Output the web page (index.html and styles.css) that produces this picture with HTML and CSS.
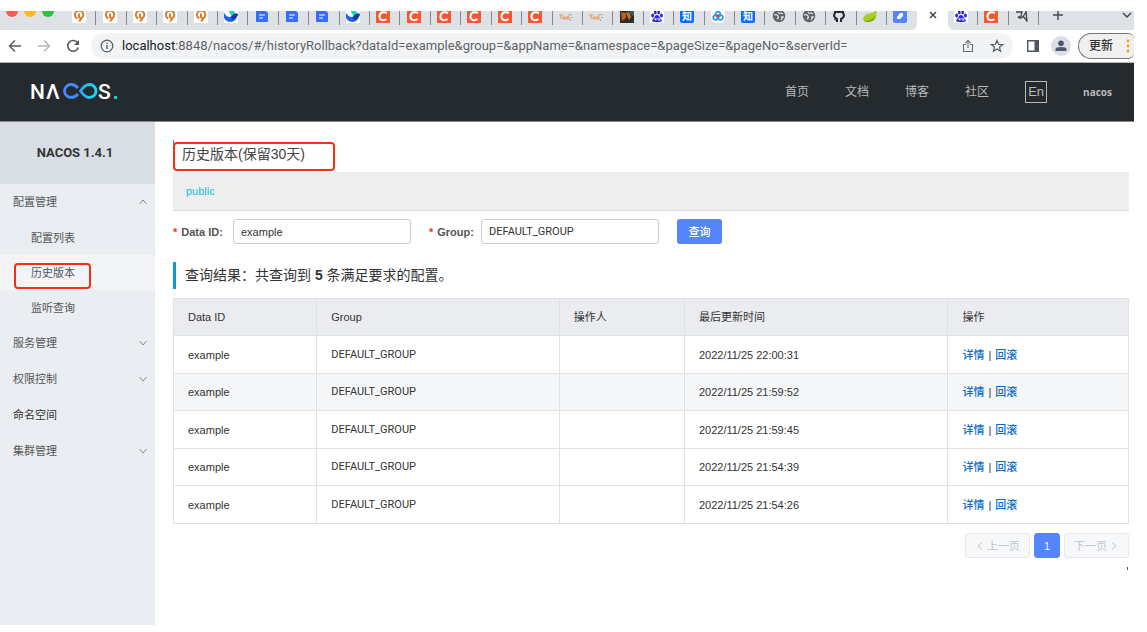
FILE: index.html
```html
<!DOCTYPE html>
<html lang="zh-CN">
<head>
<meta charset="utf-8">
<title>Nacos</title>
<link rel="stylesheet" href="styles.css">
</head>
<body>
<svg class="defs" aria-hidden="true">
  <symbol id="q" viewBox="0 0 14 14"><rect width="14" height="14" fill="#fff"/><path d="M5.200 9.500A4.200 4.200 0 1 1 9.500 9.200M7 4.500V8.500M7 8L9 10L7 12.500" fill="none" stroke="#e07a2c" stroke-width="2"/></symbol>
  <symbol id="bird" viewBox="0 0 14 14"><rect width="14" height="14" fill="#fff"/><path d="M4 1h5l3 4-4 3z" fill="#20d3b2"/><path d="M0 4c3 4 5 5 8 3 1-2 3-3 6-2-1 5-4 8-7 8S2 12 0 9z" fill="#2563e8"/><path d="M7 8c2-3 4-4 7-3-1 3-3 5-6 6z" fill="#153a9c"/></symbol>
  <symbol id="doc" viewBox="0 0 14 14"><path d="M1 2q0-1 1-1h8l3 3v8q0 1-1 1H2q-1 0-1-1z" fill="#356dff"/><path d="M4 6h6M4 9h4" stroke="#fff" stroke-width="1"/></symbol>
  <symbol id="c" viewBox="0 0 14 14"><rect width="14" height="14" fill="#fc5531"/><path d="M11 4.300C9 2.500 4 2.500 3.500 7S8 12 10.500 10" fill="none" stroke="#fff" stroke-width="2"/></symbol>
  <symbol id="tool" viewBox="0 0 14 14"><path d="M0 6h4M2 6v4M4 8h2v2H4zM7 8h2v2H7zM10 5v6" fill="none" stroke="#ee9650"/><path d="M12 5v1M13 8v1M11 11h1" stroke="#6572bd"/></symbol>
  <symbol id="photo" viewBox="0 0 14 14"><rect width="14" height="14" fill="#35291f"/><path d="M1 3l5 1v5l-4 3z" fill="#b85f22"/><path d="M6 4l3-1 2 5-2 3z" fill="#d17424"/><path d="M9 1h5v6l-3-1z" fill="#355e68"/><path d="M9 12l5-3v5H9z" fill="#193839"/></symbol>
  <symbol id="paw" viewBox="0 0 14 14"><rect width="14" height="14" rx="1" fill="#fff"/><g fill="#302bd6"><ellipse cx="2.700" cy="6.500" rx="1.500" ry="1.900"/><ellipse cx="5.300" cy="3.500" rx="1.400" ry="1.900"/><ellipse cx="8.700" cy="3.500" rx="1.400" ry="1.900"/><ellipse cx="11.400" cy="6.500" rx="1.500" ry="1.900"/><path d="M7 6c2 0 2 2 4 4s0 3-2 3H5c-2 0-4-1-2-3s2-4 4-4z"/></g><path d="M5 9v2h1V9M8 9v2h2V9" stroke="#fff" stroke-width=".8" fill="none"/></symbol>
  <symbol id="zhi" viewBox="0 0 14 14"><rect width="14" height="14" rx="2" fill="#0b6cff"/><text x="7" y="11" text-anchor="middle" class="zhi-text">知</text></symbol>
  <symbol id="cloud" viewBox="0 0 14 14"><rect width="14" height="14" rx="5" fill="#fff"/><g fill="none" stroke-width="1.700"><circle cx="7" cy="5" r="2.300" stroke="#1898ee"/><circle cx="4.500" cy="8.500" r="2.300" stroke="#1898ee"/><circle cx="9.500" cy="8.500" r="2.300" stroke="#16a6e8"/><path d="M5 8l2-2 2 2" stroke="#ee4059"/></g></symbol>
  <symbol id="globe" viewBox="0 0 14 14"><circle cx="7" cy="7" r="6.200" fill="#5f6368"/><path d="M2 6q3-1 4 1t-1 3M6 3q1 2 3 1l2 1M9 8l2 0-2 3" stroke="#e3e6e9" stroke-width="1.300" fill="none"/></symbol>
  <symbol id="cat" viewBox="0 0 14 14"><path d="M5 13v-3c-2-1-3-2-3-4l1-2V2l2 1h4l2-1v2l1 2c0 2-1 3-3 4v3" fill="none" stroke="#25292e" stroke-width="2"/><path d="M2 10l3 2" stroke="#25292e"/></symbol>
  <symbol id="leaf" viewBox="0 0 14 14"><path d="M13 1c2 8-1 12-9 12-6 0-4-7 0-8 4-1 7-1 9-4z" fill="#a9cd20"/><path d="M1 12c6 0 10-2 11-6 0 5-3 7-8 7z" fill="#6da31c"/></symbol>
  <symbol id="tag" viewBox="0 0 14 14"><rect width="14" height="14" rx="2" fill="#5484ff"/><path d="M4 8l3-4h3v3l-3 3H4z" fill="#fff"/></symbol>
  <symbol id="brush" viewBox="0 0 14 14"><path d="M1 3h6l-1 4-3 1M3 8c3 3 6-1 8-5M8 7l4 5M11 1l1 12" fill="none" stroke="#44474a" stroke-width="1.300"/></symbol>
  <symbol id="down" viewBox="0 0 10 10"><path d="M1.500 3L5 7l3.500-4" fill="none" stroke="currentColor"/></symbol>
</svg>

<div class="browser">
  <div class="tabstrip">
    <div class="lights"><i class="light red"></i><i class="light amber"></i><i class="light green"></i></div>
    <div class="tabs before">
      <span class="tab"><svg><use href="#q"/></svg></span><span class="tab"><svg><use href="#q"/></svg></span><span class="tab"><svg><use href="#q"/></svg></span><span class="tab"><svg><use href="#q"/></svg></span><span class="tab"><svg><use href="#q"/></svg></span>
      <span class="tab"><svg><use href="#bird"/></svg></span><span class="tab"><svg><use href="#doc"/></svg></span><span class="tab"><svg><use href="#doc"/></svg></span><span class="tab"><svg><use href="#doc"/></svg></span><span class="tab"><svg><use href="#bird"/></svg></span>
      <span class="tab"><svg><use href="#c"/></svg></span><span class="tab"><svg><use href="#c"/></svg></span><span class="tab"><svg><use href="#c"/></svg></span><span class="tab"><svg><use href="#c"/></svg></span><span class="tab"><svg><use href="#c"/></svg></span><span class="tab"><svg><use href="#c"/></svg></span>
      <span class="tab"><svg><use href="#tool"/></svg></span><span class="tab"><svg><use href="#tool"/></svg></span><span class="tab"><svg><use href="#photo"/></svg></span><span class="tab"><svg><use href="#paw"/></svg></span><span class="tab"><svg><use href="#zhi"/></svg></span><span class="tab"><svg><use href="#cloud"/></svg></span><span class="tab"><svg><use href="#zhi"/></svg></span>
      <span class="tab"><svg><use href="#globe"/></svg></span><span class="tab"><svg><use href="#globe"/></svg></span><span class="tab"><svg><use href="#cat"/></svg></span><span class="tab"><svg><use href="#leaf"/></svg></span><span class="tab"><svg><use href="#tag"/></svg></span>
    </div>
    <button class="tab-active" aria-label="关闭标签页"><svg viewBox="0 0 10 10"><path d="M2 2l6 6M8 2l-6 6" stroke="#45484c" stroke-width="1.500"/></svg></button>
    <div class="tabs after">
      <span class="tab"><svg><use href="#paw"/></svg></span><span class="tab"><svg><use href="#c"/></svg></span><span class="tab"><svg><use href="#brush"/></svg></span>
    </div>
    <div class="tab-tools">
      <button class="plain" aria-label="新标签页"><svg viewBox="0 0 12 12"><path d="M6 1v10M1 6h10" stroke="#45484c" stroke-width="1.500"/></svg></button>
      <button class="plain" aria-label="搜索标签页"><svg viewBox="0 0 12 12"><path d="M2 4l4 4 4-4" fill="none" stroke="#45484c" stroke-width="1.500"/></svg></button>
    </div>
  </div>

  <div class="toolbar">
    <div class="history">
      <button class="plain" aria-label="后退"><svg viewBox="0 0 14 14"><path d="M13 7H1.500M7 1.500L1.500 7 7 12.500" fill="none" stroke="#56595d" stroke-width="1.500"/></svg></button>
      <button class="plain" aria-label="前进"><svg viewBox="0 0 14 14"><path d="M1 7h11.500M7 1.500L12.500 7 7 12.500" fill="none" stroke="#b5b7ba" stroke-width="1.500"/></svg></button>
      <button class="plain" aria-label="刷新"><svg viewBox="0 0 14 14"><path d="M12 4.500A5.400 5.400 0 1 0 12.300 8.500" fill="none" stroke="#56595d" stroke-width="1.600"/><path d="M13 1v5H8z" fill="#56595d"/></svg></button>
    </div>
    <div class="address">
      <svg class="info" viewBox="0 0 14 14"><circle cx="7" cy="7" r="5.800" fill="none" stroke="#56595d" stroke-width="1.200"/><path d="M7 6v4M7 3.700v1.300" stroke="#56595d" stroke-width="1.400"/></svg>
      <span class="url"><b>localhost</b>:8848/nacos/#/historyRollback?dataId=example&amp;group=&amp;appName=&amp;namespace=&amp;pageSize=&amp;pageNo=&amp;serverId=</span>
      <button class="plain" aria-label="分享"><svg viewBox="0 0 14 14"><path d="M5 5.500H2.500v7h9v-7H9M7 9V1.500M4.500 4L7 1.500 9.500 4" fill="none" stroke="#6a6d71" stroke-width="1.100"/></svg></button>
      <button class="plain" aria-label="收藏"><svg viewBox="0 0 14 14"><path d="M7 1.500l1.600 3.800 4.100.3-3.200 2.600 1 4L7 10l-3.500 2.200 1-4L1.300 5.600l4.100-.3z" fill="none" stroke="#56595d" stroke-width="1.200"/></svg></button>
    </div>
    <button class="plain panel" aria-label="侧边栏"><svg viewBox="0 0 14 14"><path d="M1.700 1.700h10.600v10.600H1.700z" fill="none" stroke="#4f5563" stroke-width="1.400"/><path d="M8.500 2H12v10H8.500z" fill="#4f5563"/></svg></button>
    <button class="plain avatar" aria-label="用户"><svg viewBox="0 0 20 20"><circle cx="10" cy="10" r="10" fill="#dcdfe5"/><circle cx="10" cy="7.200" r="2.800" fill="#4c5870"/><path d="M4.500 15v-2q0-2 5.500-2t5.500 2v2z" fill="#4c5870"/></svg></button>
    <button class="update">更新<svg viewBox="0 0 4 14"><g fill="#f39b16"><circle cx="2" cy="2" r="1.400"/><circle cx="2" cy="7" r="1.400"/><circle cx="2" cy="12" r="1.400"/></g></svg></button>
  </div>

  <header class="site-header">
    <a class="logo" href="#" aria-label="NACOS">
      <svg viewBox="0 0 90 22">
        <defs><linearGradient id="loop" x1="0" x2="1"><stop offset="0" stop-color="#2aa8f2"/><stop offset="1" stop-color="#18dced"/></linearGradient></defs>
        <text class="logo-text" x="0" y="18">N</text><text class="logo-text" x="16" y="18">Λ</text><text class="logo-text" x="68" y="18">S</text>
        <path d="M48 7Q45 3.500 41 3.500A6.500 6.500 0 0 0 41 16.500Q45 16.500 48 13" fill="none" stroke="#438aff" stroke-width="2.800"/>
        <path d="M50.500 10Q55 3.500 59.500 3.500A6.500 6.500 0 0 1 59.500 16.500Q55 16.500 50.500 10z" fill="none" stroke="url(#loop)" stroke-width="2.800" stroke-linejoin="round"/>
        <path d="M84 15h3v3h-3z" fill="#17c9dc"/>
      </svg>
    </a>
    <nav class="site-nav"><a href="#">首页</a><a href="#">文档</a><a href="#">博客</a><a href="#">社区</a><button class="lang">En</button><a class="user" href="#">nacos</a></nav>
  </header>

  <div class="workspace">
    <aside class="sidebar">
      <h2 class="version">NACOS 1.4.1</h2>
      <nav class="menu">
        <a class="item" href="#">配置管理<svg class="up"><use href="#down"/></svg></a>
        <a class="sub" href="#">配置列表</a>
        <a class="sub selected" href="#">历史版本</a>
        <a class="sub" href="#">监听查询</a>
        <a class="item" href="#">服务管理<svg><use href="#down"/></svg></a>
        <a class="item" href="#">权限控制<svg><use href="#down"/></svg></a>
        <a class="item strong" href="#">命名空间</a>
        <a class="item" href="#">集群管理<svg><use href="#down"/></svg></a>
      </nav>
    </aside>

    <main class="content">
      <h1 class="title">历史版本(保留30天)</h1>
      <div class="namespace"><a href="#">public</a></div>
      <form class="query">
        <label for="data-id"><i>*</i>Data ID:</label>
        <input id="data-id" type="text" value="example">
        <label class="group-label" for="group"><i>*</i>Group:</label>
        <input id="group" class="group-name" type="text" value="DEFAULT_GROUP">
        <button type="button" class="search">查询</button>
      </form>
      <p class="result">查询结果：共查询到 <b>5</b> 条满足要求的配置。</p>
      <table class="versions">
        <colgroup><col class="col-id"><col class="col-group"><col class="col-operator"><col class="col-time"><col></colgroup>
        <thead><tr><th>Data ID</th><th>Group</th><th>操作人</th><th>最后更新时间</th><th>操作</th></tr></thead>
        <tbody>
          <tr><td>example</td><td class="group-name">DEFAULT_GROUP</td><td></td><td>2022/11/25 22:00:31</td><td><a href="#">详情</a><span class="bar">|</span><a href="#">回滚</a></td></tr>
          <tr class="hover"><td>example</td><td class="group-name">DEFAULT_GROUP</td><td></td><td>2022/11/25 21:59:52</td><td><a href="#">详情</a><span class="bar">|</span><a href="#">回滚</a></td></tr>
          <tr><td>example</td><td class="group-name">DEFAULT_GROUP</td><td></td><td>2022/11/25 21:59:45</td><td><a href="#">详情</a><span class="bar">|</span><a href="#">回滚</a></td></tr>
          <tr><td>example</td><td class="group-name">DEFAULT_GROUP</td><td></td><td>2022/11/25 21:54:39</td><td><a href="#">详情</a><span class="bar">|</span><a href="#">回滚</a></td></tr>
          <tr><td>example</td><td class="group-name">DEFAULT_GROUP</td><td></td><td>2022/11/25 21:54:26</td><td><a href="#">详情</a><span class="bar">|</span><a href="#">回滚</a></td></tr>
        </tbody>
      </table>
      <div class="pager">
        <button class="page" disabled><svg class="prev"><use href="#down"/></svg>上一页</button>
        <button class="page current">1</button>
        <button class="page" disabled>下一页<svg class="next"><use href="#down"/></svg></button>
      </div>
      <i class="mark"></i>
    </main>
  </div>
</div>
</body>
</html>
```
FILE: styles.css
```css
*, ::after { box-sizing: border-box; }
body {
  margin: 0;
  min-height: 100vh;
  padding: 11px 13px 7px 0;
  display: flex;
  background: #fff;
  color: #333;
  font: 11px/16px "Liberation Sans", "Noto Sans CJK SC", sans-serif;
}
a { color: inherit; text-decoration: none; }
button, input { font: inherit; color: inherit; margin: 0; }
svg { display: block; flex: none; }
.defs { position: absolute; width: 0; height: 0; }
.plain { border: 0; padding: 0; background: none; }
.browser { flex: 1; min-width: 0; display: flex; flex-direction: column; overflow: hidden; }

.tabstrip { display: flex; height: 19px; overflow: hidden; background: #fff; }
.lights { width: 66px; padding: 0 0 13px 6px; display: flex; gap: 6px; align-items: flex-end; background: #dee1e6; }
.light { width: 12px; height: 12px; border-radius: 50%; }
.red { background: #fc5b57; }
.amber { background: #fdb924; }
.green { background: #28c63f; }
.tabs { display: flex; background: #dee1e6; min-width: 0; }
.before { flex: 28; border-bottom-right-radius: 6px; }
.after { flex: 3; border-bottom-left-radius: 6px; }
.tab { flex: 1; height: 14px; display: flex; justify-content: center; align-items: flex-end; padding: 0 3px 2px 0; border-right: 1px solid #85888c; }
.before .tab:last-child { border-right-color: transparent; }
.tab svg { width: 14px; height: 14px; }
.zhi-text { fill: #fff; font: bold 10px "Noto Sans CJK SC", sans-serif; }
.tab-active { flex: 1; border: 0; padding: 0 0 10px; display: flex; align-items: flex-end; justify-content: center; background: #fff; }
.tab-active svg { width: 10px; height: 10px; }
.tab-tools { width: 95px; padding: 0 1px 9px 13px; display: flex; justify-content: space-between; align-items: flex-end; background: #dee1e6; }
.tab-tools svg { width: 12px; height: 12px; }

.toolbar { height: 33px; display: flex; align-items: center; border-bottom: 1px solid #b5b8bb; background: #fff; overflow: hidden; }
.history { width: 91px; padding-left: 8px; display: flex; gap: 15px; }
.history svg { width: 14px; height: 14px; }
.address { flex: 1; min-width: 0; height: 26px; padding: 0 9px; display: flex; align-items: center; border-radius: 13px; background: #f1f3f4; }
.info { width: 14px; height: 14px; margin-right: 8px; }
.url { flex: 1; min-width: 0; overflow: hidden; white-space: nowrap; font-family: Roboto, sans-serif; font-size: 13px; color: #5f6368; }
.url b { font-weight: 400; color: #202124; }
.address button { margin-left: 15px; }
.address svg { width: 14px; height: 14px; }
.panel { margin-left: 13px; }
.panel svg { width: 14px; height: 14px; }
.avatar { margin-left: 11px; }
.avatar svg { width: 20px; height: 20px; }
.update { width: 56px; height: 26px; margin-left: 7px; padding: 0 4px 0 10px; display: flex; align-items: center; justify-content: space-between; border: 1px solid #777; border-right: 0; border-radius: 13px 6px 6px 13px; background: #f0f0f0; font-size: 12px; font-weight: 500; white-space: nowrap; }
.update svg { width: 4px; height: 14px; }

.site-header { height: 59px; padding: 0 22px 0 30px; display: flex; align-items: center; justify-content: space-between; border-bottom: 1px solid #85898c; background: #252a2f; }
.logo svg { width: 90px; height: 22px; }
.logo-text { fill: #fff; font: 500 21px Roboto, sans-serif; }
.site-nav { display: flex; align-items: center; gap: 36px; color: #b8babb; font-size: 12px; }
.lang { width: 22px; height: 22px; padding: 0; border: 1px solid #b8babb; background: none; font-size: 13px; line-height: 20px; }
.user { font: bold 10px/16px "Open Sans", sans-serif; }

.workspace { flex: 1; display: flex; }
.sidebar { width: 155px; flex: none; background: #eaedf1; color: #555; }
.version { height: 62px; margin: 0; padding-right: 5px; display: flex; align-items: center; justify-content: center; background: #d9dee4; color: #333; font: bold 13px/16px Roboto, sans-serif; }
.menu { display: flex; flex-direction: column; }
.item { height: 36px; padding: 0 7px 0 13px; display: flex; align-items: center; justify-content: space-between; }
.item svg { width: 10px; height: 10px; color: #888; }
.item .up { transform: rotate(180deg); }
.strong { color: #333; }
.sub { height: 35px; padding-left: 31px; display: flex; align-items: center; }
.selected { position: relative; background: #f2f4f7; }
.selected::after, .title::after { content: ""; position: absolute; border: 2px solid #f5310f; border-radius: 4px; }
.selected::after { left: 14px; top: 8px; width: 77px; height: 26px; }

.content { flex: 1; min-width: 0; padding: 18px 5px 0 18px; display: flex; flex-direction: column; }
.title { position: relative; height: 28px; margin: 0 0 4px; padding-left: 8px; border-left: 1px solid #209bd0; font-size: 14px; font-weight: 400; line-height: 28px; color: #444; }
.title::after { left: -1px; top: 2px; width: 162px; height: 29px; }
.namespace { height: 39px; padding: 0 13px; display: flex; align-items: center; border-bottom: 1px solid #dcdcdc; background: #eee; color: #12bfdc; }
.query { padding: 8px 0; display: flex; align-items: center; }
.query label { width: 60px; color: #555; font-weight: bold; white-space: nowrap; }
.query label i { margin-right: 4px; color: #ff3000; font-style: normal; }
.query .group-label { width: 52px; margin-left: 18px; }
.query input { width: 178px; height: 25px; padding: 0 7px; border: 1px solid #c9ccd4; border-radius: 3px; background: #fff; }
.query .search { width: 45px; height: 25px; margin-left: 18px; padding: 0; border: 0; border-radius: 3px; background: #5584ff; color: #fff; font-weight: 500; }
.group-name { font-family: Roboto, sans-serif; }
.result { height: 27px; margin: 10px 0 9px; padding-left: 9px; border-left: 3px solid #0c9bce; font-size: 14px; line-height: 27px; }

.versions { width: 100%; table-layout: fixed; border-collapse: collapse; }
.col-id { width: 15%; }
.col-group { width: 25.4%; }
.col-operator { width: 13.1%; }
.col-time { width: 27.6%; }
.versions th, .versions td { height: 37px; padding: 0 14px; border: 1px solid #dfe1e6; text-align: left; font-weight: 400; white-space: nowrap; }
.versions tbody tr:nth-child(odd) td { height: 38px; }
.versions th { background: #ebecf0; }
.hover { background: #f5f6f8; }
.versions a { color: #0b6bc9; font-weight: 500; }
.bar { margin: 0 4px; }

.pager { margin-top: 9px; display: flex; justify-content: flex-end; gap: 4px; }
.page { min-width: 26px; height: 25px; padding: 0 9px; display: flex; align-items: center; gap: 2px; border: 1px solid #e6e8ed; border-radius: 3px; background: #f7f8fa; color: #c3c6cb; }
.page svg { width: 10px; height: 10px; }
.prev { transform: rotate(90deg); }
.next { transform: rotate(-90deg); }
.current { padding: 0; justify-content: center; border-color: #5584ff; background: #5584ff; color: #fff; }
.mark { width: 1px; height: 3px; margin: 9px 1px 0 0; align-self: flex-end; background: #555; }
```
